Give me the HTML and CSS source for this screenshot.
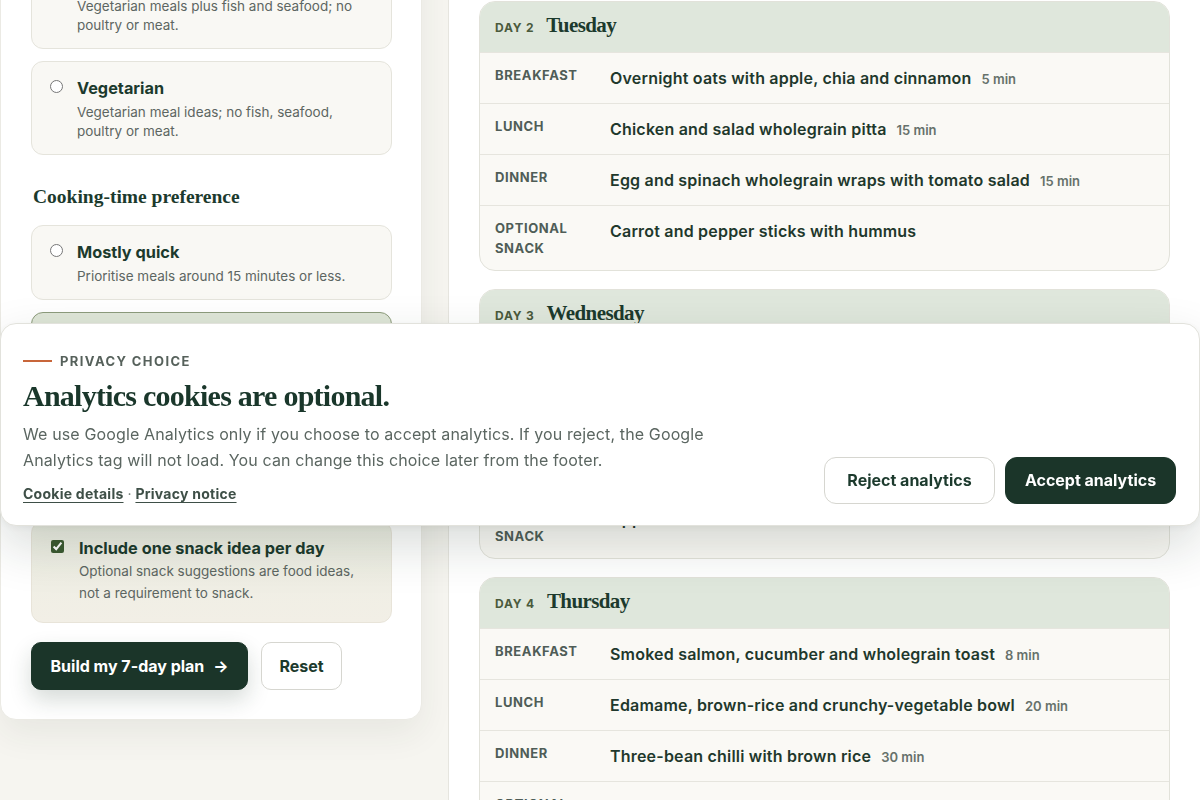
FILE: index.html
```html
<!DOCTYPE html>
<html lang="en">
<head>
<meta charset="utf-8">
<title>7-day meal plan</title>
<link rel="stylesheet" href="styles.css">
</head>
<body>
<div class="layout">
  <aside class="planner">
    <div class="options">
      <label class="option">
        <input type="radio" name="diet">
        <span class="option-body">
          <span class="option-title">Pescatarian</span>
          <span class="option-desc">Vegetarian meals plus fish and seafood; no poultry or meat.</span>
        </span>
      </label>
      <label class="option">
        <input type="radio" name="diet">
        <span class="option-body">
          <span class="option-title">Vegetarian</span>
          <span class="option-desc">Vegetarian meal ideas; no fish, seafood, poultry or meat.</span>
        </span>
      </label>
    </div>

    <h3 class="group-title">Cooking-time preference</h3>
    <div class="options">
      <label class="option">
        <input type="radio" name="time">
        <span class="option-body">
          <span class="option-title">Mostly quick</span>
          <span class="option-desc">Prioritise meals around 15 minutes or less.</span>
        </span>
      </label>
      <label class="option selected">
        <input type="radio" name="time" checked>
        <span class="option-body">
          <span class="option-title">Balanced</span>
          <span class="option-desc">A mix of quick meals and a few longer cooks.</span>
        </span>
      </label>
      <label class="option">
        <input type="radio" name="time">
        <span class="option-body">
          <span class="option-title">Happy to cook longer</span>
          <span class="option-desc">Include meals that take 30 minutes or more.</span>
        </span>
      </label>
    </div>

    <label class="option snack">
      <input type="checkbox" checked>
      <span class="option-body">
        <span class="option-title">Include one snack idea per day</span>
        <span class="option-desc">Optional snack suggestions are food ideas, not a requirement to snack.</span>
      </span>
    </label>

    <div class="actions">
      <button class="btn btn-primary btn-build" type="button">Build my 7-day plan <span class="arrow">→</span></button>
      <button class="btn btn-ghost btn-reset" type="button">Reset</button>
    </div>
  </aside>

  <main class="plan">
    <section class="day">
      <header class="day-head"><span class="day-num">DAY 2</span><h2 class="day-name">Tuesday</h2></header>
      <div class="meal"><span class="meal-label">Breakfast</span><span class="meal-text">Overnight oats with apple, chia and cinnamon<span class="meal-time">5 min</span></span></div>
      <div class="meal"><span class="meal-label">Lunch</span><span class="meal-text">Chicken and salad wholegrain pitta<span class="meal-time">15 min</span></span></div>
      <div class="meal"><span class="meal-label">Dinner</span><span class="meal-text">Egg and spinach wholegrain wraps with tomato salad<span class="meal-time">15 min</span></span></div>
      <div class="meal"><span class="meal-label">Optional snack</span><span class="meal-text">Carrot and pepper sticks with hummus</span></div>
    </section>

    <section class="day">
      <header class="day-head"><span class="day-num">DAY 3</span><h2 class="day-name">Wednesday</h2></header>
      <div class="meal"><span class="meal-label">Breakfast</span><span class="meal-text">Greek yoghurt with berries and oats<span class="meal-time">5 min</span></span></div>
      <div class="meal"><span class="meal-label">Lunch</span><span class="meal-text">Lentil and vegetable soup with wholegrain bread<span class="meal-time">20 min</span></span></div>
      <div class="meal"><span class="meal-label">Dinner</span><span class="meal-text">Baked cod with new potatoes and greens<span class="meal-time">25 min</span></span></div>
      <div class="meal"><span class="meal-label">Optional snack</span><span class="meal-text">Apple with a small handful of unsalted nuts</span></div>
    </section>

    <section class="day">
      <header class="day-head"><span class="day-num">DAY 4</span><h2 class="day-name">Thursday</h2></header>
      <div class="meal"><span class="meal-label">Breakfast</span><span class="meal-text">Smoked salmon, cucumber and wholegrain toast<span class="meal-time">8 min</span></span></div>
      <div class="meal"><span class="meal-label">Lunch</span><span class="meal-text">Edamame, brown-rice and crunchy-vegetable bowl<span class="meal-time">20 min</span></span></div>
      <div class="meal"><span class="meal-label">Dinner</span><span class="meal-text">Three-bean chilli with brown rice<span class="meal-time">30 min</span></span></div>
      <div class="meal"><span class="meal-label">Optional snack</span><span class="meal-text">Oatcakes with cottage cheese</span></div>
    </section>
  </main>
</div>

<div class="cookie" role="dialog" aria-label="Privacy choice">
  <div class="cookie-text">
    <p class="eyebrow"><span class="eyebrow-line"></span>PRIVACY CHOICE</p>
    <h2 class="cookie-title">Analytics cookies are optional.</h2>
    <p class="cookie-copy">We use Google Analytics only if you choose to accept analytics. If you reject, the Google Analytics tag will not load. You can change this choice later from the footer.</p>
    <p class="cookie-links"><a href="#">Cookie details</a> · <a href="#">Privacy notice</a></p>
  </div>
  <div class="cookie-actions">
    <button class="btn btn-ghost cookie-btn" type="button">Reject analytics</button>
    <button class="btn btn-primary cookie-btn" type="button">Accept analytics</button>
  </div>
</div>
</body>
</html>
```

FILE: styles.css
```css
* { box-sizing: border-box; }

html, body {
  margin: 0;
  padding: 0;
}

body {
  background: #f6f5f0;
  font-family: Inter, "Noto Sans", "Liberation Sans", sans-serif;
  color: #1c3a2d;
  overflow: hidden;
  height: 800px;
}

.layout {
  display: grid;
  grid-template-columns: 422px 752px;
  column-gap: 26px;
  align-items: start;
  margin-top: -75px;
}

/* Left planner panel */
.planner {
  background: #ffffff;
  border: 1px solid #ebeae4;
  border-radius: 16px;
  padding: 29px 29px 29px 30px;
  box-shadow: 0 14px 34px rgba(40, 52, 42, 0.07);
}

.options {
  display: flex;
  flex-direction: column;
  gap: 12px;
}

.option {
  display: grid;
  grid-template-columns: 13px 1fr;
  column-gap: 14px;
  padding: 14px 20px 13px 18px;
  background: #f9f8f4;
  border: 1px solid #e5e4dc;
  border-radius: 12px;
  cursor: pointer;
}

.option input {
  margin: 4px 0 0 0;
  width: 13px;
  height: 13px;
  accent-color: #3b5a31;
}

.option-body {
  display: flex;
  flex-direction: column;
}

.option-title {
  font-size: 16.3px;
  font-weight: 700;
  line-height: 24px;
  color: #1c3a2d;
}

.option-desc {
  margin-top: 3px;
  font-size: 13.5px;
  line-height: 19px;
  color: #5d6662;
}

.option.selected {
  background: #dfe6d8;
  border-color: #8d9c7c;
}

.group-title {
  margin: 30px 0 16px 2px;
  font-family: "Liberation Serif", "DejaVu Serif", serif;
  font-size: 19.5px;
  line-height: 24px;
  font-weight: 700;
  color: #1c3a2d;
}

.option.snack {
  margin-top: 47px;
  padding: 14px 20px 18px 19px;
  column-gap: 15px;
  background: linear-gradient(180deg, #eceee3 0%, #f2efe6 100%);
  border-color: #e8e4d9;
}

.option.snack input {
  margin-top: 4px;
}

.option.snack .option-desc {
  margin-top: 0;
  line-height: 22px;
}

.actions {
  display: flex;
  gap: 13px;
  margin-top: 19px;
}

.btn {
  font-family: Inter, "Noto Sans", "Liberation Sans", sans-serif;
  font-size: 16px;
  font-weight: 700;
  line-height: 24px;
  border-radius: 10px;
  padding: 11px 17px;
  border: 1px solid transparent;
  cursor: pointer;
}

.btn-build {
  padding: 11px 18.5px;
}

.btn-reset {
  padding: 11px 17.5px;
}

.btn-primary {
  background: #1b3529;
  border-color: #1b3529;
  color: #ffffff;
  box-shadow: 0 10px 22px rgba(27, 53, 41, 0.18);
}

.btn-ghost {
  background: #ffffff;
  border-color: #d6d6d0;
  color: #1c3a2d;
}

.arrow {
  margin-left: 5px;
  font-weight: 700;
}

/* Right plan panel */
.plan {
  background: #ffffff;
  border-left: 1px solid #e6e5df;
  padding: 76px 30px 40px 30px;
  display: flex;
  flex-direction: column;
  gap: 18px;
}

.day {
  background: #faf9f5;
  border: 1px solid #e2e2da;
  border-radius: 16px;
  overflow: hidden;
}

.day-head {
  display: flex;
  align-items: baseline;
  gap: 12px;
  height: 50px;
  background: #dfe7dc;
  padding: 10px 15px 0 15px;
}

.day-num {
  font-size: 12px;
  line-height: 16px;
  font-weight: 700;
  letter-spacing: 0.8px;
  color: #4a5a3c;
}

.day-name {
  margin: 0;
  font-family: "Liberation Serif", "DejaVu Serif", serif;
  font-size: 21px;
  line-height: 27px;
  font-weight: 700;
  letter-spacing: -0.6px;
  color: #1c3a2d;
}

.meal {
  display: grid;
  grid-template-columns: 100px 1fr;
  column-gap: 15px;
  padding: 12px 15px;
  border-top: 1px solid #e6e5de;
}

.meal-label {
  font-size: 13px;
  line-height: 20px;
  font-weight: 700;
  letter-spacing: 0.6px;
  text-transform: uppercase;
  color: #4f5d57;
}

.meal-text {
  display: block;
  font-size: 16px;
  line-height: 26px;
  font-weight: 600;
  letter-spacing: 0.2px;
  color: #1f382c;
}

.meal-time {
  margin-left: 10px;
  font-size: 13px;
  line-height: 1;
  font-weight: 600;
  letter-spacing: 0;
  color: #66716b;
}

/* Cookie banner */
.cookie {
  position: fixed;
  top: 323px;
  left: 0;
  right: 0;
  display: flex;
  justify-content: space-between;
  align-items: flex-end;
  background: #ffffff;
  border: 1px solid #e2e2dc;
  border-radius: 16px;
  padding: 28px 23px 21px 22px;
  box-shadow: 0 20px 50px rgba(24, 44, 34, 0.16), 0 2px 8px rgba(24, 44, 34, 0.05);
}

.cookie-text {
  max-width: 704px;
}

.eyebrow {
  display: flex;
  align-items: center;
  gap: 8px;
  margin: 0;
  font-size: 13px;
  line-height: 18px;
  font-weight: 700;
  letter-spacing: 1.4px;
  color: #56615b;
}

.eyebrow-line {
  display: inline-block;
  width: 29px;
  height: 2px;
  background: #c8663a;
}

.cookie-title {
  margin: 8px 0 7px 0;
  font-family: "Liberation Serif", "DejaVu Serif", serif;
  font-size: 30px;
  line-height: 36px;
  font-weight: 700;
  letter-spacing: -0.75px;
  color: #1a372b;
}

.cookie-copy {
  margin: 0;
  font-size: 16px;
  line-height: 26px;
  letter-spacing: 0.13px;
  color: #5b6661;
}

.cookie-links {
  margin: 11px 0 0 0;
  font-size: 14px;
  line-height: 20px;
  color: #6a746f;
}

.cookie-links a {
  color: #3e4f47;
  font-weight: 700;
  letter-spacing: 0.25px;
  text-decoration: underline;
  text-underline-offset: 3px;
}

.cookie-actions {
  display: flex;
  gap: 10px;
}

.cookie-btn {
  width: 171px;
  padding: 11px 10px;
  line-height: 23px;
  border-radius: 12px;
  box-shadow: none;
}
```
